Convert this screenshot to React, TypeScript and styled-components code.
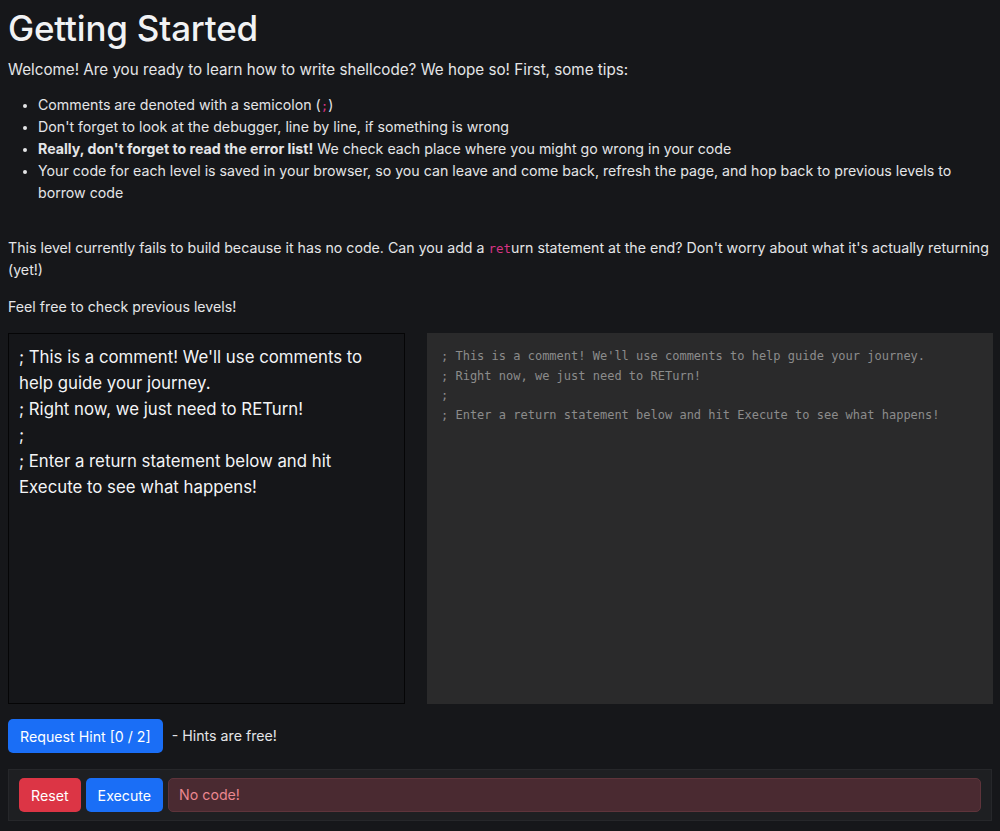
import styled, { createGlobalStyle } from "styled-components";

const GlobalStyle = createGlobalStyle`
    html, body {
        margin: 0;
        padding: 0;
        background: #16171a;
    }
    body {
        font-family: Inter, "Noto Sans", "Liberation Sans", sans-serif;
        font-size: 14.2px;
        line-height: 22px;
        color: #e4e5e7;
    }
`;

const Page = styled.div`
    padding: 0 8px 0 8px;
    height: 831px;
    overflow: hidden;
`;

const Title = styled.h1`
    margin: 0;
    padding-top: 6px;
    font-size: 35px;
    line-height: 44px;
    font-weight: 500;
    color: #f1f2f4;
    letter-spacing: -0.2px;
`;

const Para = styled.p<{ $lead?: boolean }>`
    margin: ${(p) => (p.$lead ? "9px 0 13px 0" : "0 0 15px 0")};
    font-size: ${(p) => (p.$lead ? "15.2px" : "14.2px")};
`;

const Tips = styled.ul`
    margin: 0 0 33px 0;
    padding-left: 30px;
    li::marker {
        font-size: 12px;
    }
`;

const Code = styled.code`
    font-family: "DejaVu Sans Mono", "Liberation Mono", monospace;
    font-size: 12.5px;
    line-height: 1;
    color: #d63384;
`;

const EditorRow = styled.div`
    display: grid;
    grid-template-columns: 397px 566px;
    column-gap: 22px;
    margin-top: 15px;
`;

const TextArea = styled.div`
    box-sizing: border-box;
    height: 371px;
    border: 1px solid #050506;
    background: #151619;
    padding: 10px 10px;
    font-size: 16.8px;
    line-height: 26px;
    color: #f3f4f6;
`;

const Listing = styled.pre`
    margin: 0;
    box-sizing: border-box;
    height: 371px;
    background: #2a2a2b;
    padding: 14px 14px;
    font-family: "DejaVu Sans Mono", "Liberation Mono", monospace;
    font-size: 12px;
    line-height: 19.5px;
    color: #8c8c8c;
`;

const HintRow = styled.div`
    display: flex;
    align-items: center;
    gap: 9px;
    margin-top: 15px;
`;

const HintNote = styled.span`
    font-size: 14.2px;
`;

const Button = styled.button<{ $tone: "blue" | "red" }>`
    box-sizing: border-box;
    height: 34px;
    padding: 0 12px;
    border: none;
    border-radius: 5px;
    background: ${(p) => (p.$tone === "red" ? "#dc3545" : "#1a6ef6")};
    color: #ffffff;
    font-family: inherit;
    font-size: 14.2px;
`;

const ActionBar = styled.div`
    display: flex;
    align-items: center;
    gap: 5px;
    box-sizing: border-box;
    width: 984px;
    margin-top: 16px;
    padding: 8px 10px;
    background: #1e1f22;
    border: 1px solid #26272a;
`;

const Status = styled.div`
    flex: 1;
    box-sizing: border-box;
    height: 34px;
    display: flex;
    align-items: center;
    padding: 0 10px;
    border-radius: 5px;
    background: #4a2a31;
    border: 1px solid #5e343b;
    color: #ea868f;
`;

const App = () => {
    return (
        <Page>
            <GlobalStyle />
            <Title>Getting Started</Title>
            <Para $lead>
                Welcome! Are you ready to learn how to write shellcode? We hope so! First, some tips:
            </Para>
            <Tips>
                <li>Comments are denoted with a semicolon (<Code>;</Code>)</li>
                <li>Don't forget to look at the debugger, line by line, if something is wrong</li>
                <li>
                    <b>Really, don't forget to read the error list!</b> We check each place where you might go wrong in your code
                </li>
                <li>
                    Your code for each level is saved in your browser, so you can leave and come back, refresh the page, and hop back to previous levels to borrow code
                </li>
            </Tips>
            <Para>
                This level currently fails to build because it has no code. Can you add a <Code>ret</Code>urn statement at the end? Don't worry about what it's actually returning (yet!)
            </Para>
            <Para>Feel free to check previous levels!</Para>
            <EditorRow>
                <TextArea>
                    ; This is a comment! We'll use comments to help guide your journey.
                    <br />; Right now, we just need to RETurn!
                    <br />;
                    <br />; Enter a return statement below and hit Execute to see what happens!
                </TextArea>
                <Listing>
{`; This is a comment! We'll use comments to help guide your journey.
; Right now, we just need to RETurn!
;
; Enter a return statement below and hit Execute to see what happens!`}
                </Listing>
            </EditorRow>
            <HintRow>
                <Button $tone="blue">Request Hint [0 / 2]</Button>
                <HintNote>- Hints are free!</HintNote>
            </HintRow>
            <ActionBar>
                <Button $tone="red">Reset</Button>
                <Button $tone="blue">Execute</Button>
                <Status>No code!</Status>
            </ActionBar>
        </Page>
    );
};

export default App;
